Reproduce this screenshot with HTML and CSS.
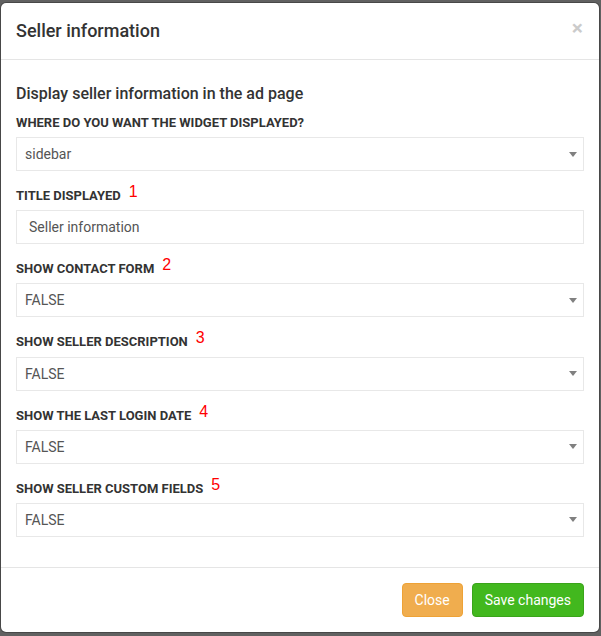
FILE: index.html
```html
<!DOCTYPE html>
<html>
<head>
<meta charset="utf-8">
<link rel="stylesheet" href="styles.css">
</head>
<body>
<div class="modal">
  <div class="modal-header">
    <h3 class="modal-title">Seller information</h3>
    <span class="close">×</span>
  </div>
  <div class="modal-body">
    <h4 class="section-title">Display seller information in the ad page</h4>
    <div class="form-group">
      <label class="label">WHERE DO YOU WANT THE WIDGET DISPLAYED?</label>
      <div class="select"><span>sidebar</span><span class="caret"></span></div>
    </div>
    <div class="form-group">
      <label class="label">TITLE DISPLAYED<span class="num">1</span></label>
      <div class="input">Seller information</div>
    </div>
    <div class="form-group">
      <label class="label">SHOW CONTACT FORM<span class="num">2</span></label>
      <div class="select"><span>FALSE</span><span class="caret"></span></div>
    </div>
    <div class="form-group">
      <label class="label">SHOW SELLER DESCRIPTION<span class="num">3</span></label>
      <div class="select"><span>FALSE</span><span class="caret"></span></div>
    </div>
    <div class="form-group">
      <label class="label">SHOW THE LAST LOGIN DATE<span class="num">4</span></label>
      <div class="select"><span>FALSE</span><span class="caret"></span></div>
    </div>
    <div class="form-group">
      <label class="label">SHOW SELLER CUSTOM FIELDS<span class="num">5</span></label>
      <div class="select"><span>FALSE</span><span class="caret"></span></div>
    </div>
  </div>
  <div class="modal-footer">
    <button class="btn btn-warning">Close</button>
    <button class="btn btn-success">Save changes</button>
  </div>
</div>
</body>
</html>
```

FILE: styles.css
```css
html, body {
  margin: 0;
  padding: 0;
}
body {
  background: #616161;
  font-family: Roboto, "Liberation Sans", sans-serif;
  color: #333;
  width: 601px;
  height: 636px;
  overflow: hidden;
}
.modal {
  box-sizing: border-box;
  width: 600px;
  margin-top: 2px;
  background: #fff;
  background-clip: padding-box;
  border: 1px solid rgba(0,0,0,0.25);
  border-radius: 6px;
}
.modal-header {
  display: flex;
  justify-content: space-between;
  align-items: center;
  padding: 15px;
  border-bottom: 1px solid #e5e5e5;
}
.modal-title {
  margin: 0;
  font-size: 18px;
  line-height: 26px;
  font-weight: 500;
  color: #333;
}
.close {
  font-size: 21px;
  font-weight: bold;
  line-height: 1;
  color: #000;
  opacity: 0.2;
  margin-top: -6px;
  margin-right: 1px;
}
.modal-body {
  padding: 15px;
}
.section-title {
  margin: 10px 0;
  font-size: 16px;
  line-height: 18px;
  font-weight: 500;
  color: #333;
}
.form-group {
  margin-bottom: 15px;
}
.label {
  display: block;
  height: 19.15px;
  font-size: 13px;
  line-height: 19px;
  font-weight: 700;
  color: #333;
  margin-bottom: 5px;
  white-space: nowrap;
}
.num {
  font-family: "Liberation Sans", sans-serif;
  font-weight: normal;
  color: #f00;
  font-size: 16px;
  line-height: 0;
  margin-left: 8px;
  position: relative;
  top: -3px;
}
.select, .input {
  box-sizing: border-box;
  height: 34px;
  border: 1px solid #e8e8e8;
  display: flex;
  align-items: center;
  font-size: 14px;
  color: #555;
}
.select {
  justify-content: space-between;
  padding: 0 6px 0 8px;
}
.input {
  padding: 0 12px;
}
.caret {
  width: 0;
  height: 0;
  border-left: 4px solid transparent;
  border-right: 4px solid transparent;
  border-top: 5px solid #808080;
}
.modal-footer {
  display: flex;
  justify-content: flex-end;
  gap: 9px;
  padding: 15px;
  border-top: 1px solid #e5e5e5;
}
.btn {
  font-family: Roboto, "Liberation Sans", sans-serif;
  font-size: 14px;
  line-height: 20px;
  padding: 6px 12px;
  border-radius: 4px;
  color: #fff;
  border: 1px solid transparent;
  cursor: pointer;
}
.btn-warning {
  background: #f0ad4e;
  border-color: #eea236;
}
.btn-success {
  background: #42b81e;
  border-color: #3aa41a;
}
```
